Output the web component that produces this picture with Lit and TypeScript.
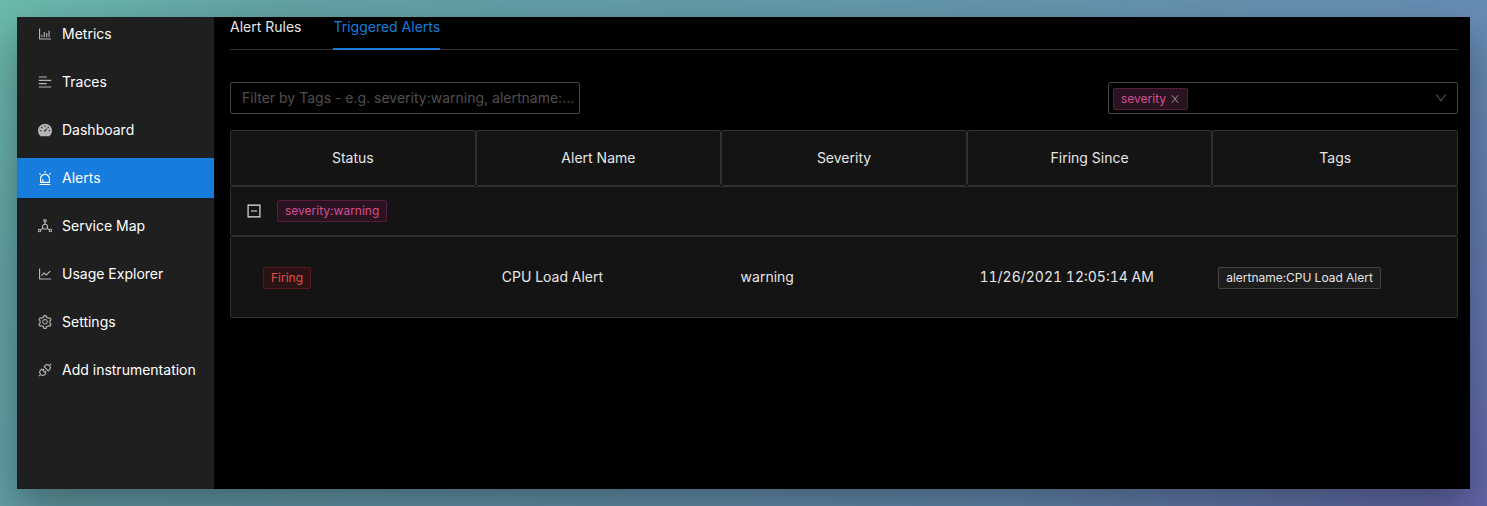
import { LitElement, html, css, svg } from "lit";
import { customElement, state } from "lit/decorators.js";

const axes =
  "M888 792H200V168c0-4.4-3.6-8-8-8h-56c-4.4 0-8 3.6-8 8v688c0 4.4 3.6 8 8 8h752c4.4 0 8-3.6 8-8v-56c0-4.4-3.6-8-8-8z";

const icons = {
  bars: svg`<path d="${axes}M288 712h56c4.4 0 8-3.6 8-8V560c0-4.4-3.6-8-8-8h-56c-4.4 0-8 3.6-8 8v144c0 4.4 3.6 8 8 8zm152 0h56c4.4 0 8-3.6 8-8V384c0-4.4-3.6-8-8-8h-56c-4.4 0-8 3.6-8 8v320c0 4.4 3.6 8 8 8zm152 0h56c4.4 0 8-3.6 8-8V462c0-4.4-3.6-8-8-8h-56c-4.4 0-8 3.6-8 8v242c0 4.4 3.6 8 8 8zm152 0h56c4.4 0 8-3.6 8-8V304c0-4.4-3.6-8-8-8h-56c-4.4 0-8 3.6-8 8v400c0 4.4 3.6 8 8 8z"/>`,
  lines: svg`<path d="M120 230h496c4.4 0 8-3.6 8-8v-56c0-4.4-3.6-8-8-8H120c-4.4 0-8 3.6-8 8v56c0 4.4 3.6 8 8 8zm0 424h496c4.4 0 8-3.6 8-8v-56c0-4.4-3.6-8-8-8H120c-4.4 0-8 3.6-8 8v56c0 4.4 3.6 8 8 8zm784 140H120c-4.4 0-8 3.6-8 8v56c0 4.4 3.6 8 8 8h784c4.4 0 8-3.6 8-8v-56c0-4.4-3.6-8-8-8zm0-424H120c-4.4 0-8 3.6-8 8v56c0 4.4 3.6 8 8 8h784c4.4 0 8-3.6 8-8v-56c0-4.4-3.6-8-8-8z"/>`,
  gauge: svg`<path d="M924.8 385.6a446.7 446.7 0 00-96-142.4 446.7 446.7 0 00-142.4-96C631.1 123.8 572.5 112 512 112s-119.1 11.8-174.4 35.2a446.7 446.7 0 00-142.4 96 446.7 446.7 0 00-96 142.4C75.8 440.9 64 499.5 64 560c0 132.7 58.3 257.7 159.9 343.1l1.7 1.4c5.8 4.8 13.1 7.5 20.6 7.5h531.7c7.5 0 14.8-2.7 20.6-7.5l1.7-1.4C901.7 817.7 960 692.7 960 560c0-60.5-11.9-119.1-35.2-174.4zM482 232c0-4.4 3.6-8 8-8h44c4.4 0 8 3.6 8 8v80c0 4.4-3.6 8-8 8h-44c-4.4 0-8-3.6-8-8v-80zM270 582c0 4.4-3.6 8-8 8h-80c-4.4 0-8-3.6-8-8v-44c0-4.4 3.6-8 8-8h80c4.4 0 8 3.6 8 8v44zm90.7-204.5l-31.1 31.1a8.03 8.03 0 01-11.3 0L261.7 352a8.03 8.03 0 010-11.3l31.1-31.1c3.1-3.1 8.2-3.1 11.3 0l56.6 56.6c3.1 3.1 3.1 8.2 0 11.3zm291.1 83.6l-84.5 84.5c5 18.7.2 39.4-14.5 54.1a55.95 55.95 0 01-79.2 0 55.95 55.95 0 010-79.2 55.87 55.87 0 0154.1-14.5l84.5-84.5c3.1-3.1 8.2-3.1 11.3 0l28.3 28.3c3.1 3.1 3.1 8.1 0 11.3zm43-52.4l-31.1-31.1a8.03 8.03 0 010-11.3l56.6-56.6c3.1-3.1 8.2-3.1 11.3 0l31.1 31.1c3.1 3.1 3.1 8.2 0 11.3l-56.6 56.6a8.03 8.03 0 01-11.3 0zM846 582c0 4.4-3.6 8-8 8h-80c-4.4 0-8-3.6-8-8v-44c0-4.4 3.6-8 8-8h80c4.4 0 8 3.6 8 8v44z"/>`,
  alert: svg`<path d="M193 796c0 17.7 14.3 32 32 32h574c17.7 0 32-14.3 32-32V563c0-176.2-142.8-319-319-319S193 386.8 193 563v233zm72-233c0-136.4 110.6-247 247-247s247 110.6 247 247v193H404V585c0-5.5-4.5-10-10-10h-44c-5.5 0-10 4.5-10 10v171h-75V563zm-48.1-252.5l39.6-39.6c3.1-3.1 3.1-8.2 0-11.3l-67.9-67.9a8.03 8.03 0 00-11.3 0l-39.6 39.6a8.03 8.03 0 000 11.3l67.9 67.9c3.1 3.1 8.1 3.1 11.3 0zm669.6-79.2l-39.6-39.6a8.03 8.03 0 00-11.3 0l-67.9 67.9a8.03 8.03 0 000 11.3l39.6 39.6c3.1 3.1 8.2 3.1 11.3 0l67.9-67.9c3.1-3.2 3.1-8.2 0-11.3zM832 892H192c-17.7 0-32 14.3-32 32v24c0 4.4 3.6 8 8 8h688c4.4 0 8-3.6 8-8v-24c0-17.7-14.3-32-32-32zM484 180h56c4.4 0 8-3.6 8-8V76c0-4.4-3.6-8-8-8h-56c-4.4 0-8 3.6-8 8v96c0 4.4 3.6 8 8 8z"/>`,
  nodes: svg`<g fill="none" stroke="currentColor" stroke-width="72"><circle cx="512" cy="560" r="160"/><circle cx="512" cy="180" r="80"/><circle cx="166" cy="796" r="80"/><circle cx="858" cy="796" r="80"/><path d="M512 250v150M232 752l146-88M792 752l-146-88"/></g>`,
  trend: svg`<path d="${axes}M305.8 637.7c3.1 3.1 8.1 3.1 11.3 0l138.3-137.6L583 628.5c3.1 3.1 8.2 3.1 11.3 0l275.4-275.3c3.1-3.1 3.1-8.2 0-11.3l-39.6-39.6a8.03 8.03 0 00-11.3 0l-230 229.9L461.4 404a8.03 8.03 0 00-11.3 0L266.3 586.7a8.03 8.03 0 000 11.3l39.5 39.7z"/>`,
  gear: svg`<path d="M924.8 625.7l-65.5-56c3.1-19 4.7-38.4 4.7-57.8s-1.6-38.8-4.7-57.8l65.5-56a32.03 32.03 0 009.3-35.2l-.9-2.6a443.74 443.74 0 00-79.7-137.9l-1.8-2.1a32.12 32.12 0 00-35.1-9.5l-81.3 28.9c-30-24.6-63.5-44-99.7-57.6l-15.7-85a32.05 32.05 0 00-25.8-25.7l-2.7-.5c-52.1-9.4-106.9-9.4-159 0l-2.7.5a32.05 32.05 0 00-25.8 25.7l-15.8 85.4a351.86 351.86 0 00-99 57.4l-81.9-29.1a32 32 0 00-35.1 9.5l-1.8 2.1a446.02 446.02 0 00-79.7 137.9l-.9 2.6c-4.5 12.5-.8 26.5 9.3 35.2l66.3 56.6c-3.1 18.8-4.6 38-4.6 57.1 0 19.2 1.5 38.4 4.6 57.1L99 625.5a32.03 32.03 0 00-9.3 35.2l.9 2.6c18.1 50.4 44.9 96.9 79.7 137.9l1.8 2.1a32.12 32.12 0 0035.1 9.5l81.9-29.1c29.8 24.5 63.1 43.9 99 57.4l15.8 85.4a32.05 32.05 0 0025.8 25.7l2.7.5a449.4 449.4 0 00159 0l2.7-.5a32.05 32.05 0 0025.8-25.7l15.7-85a350 350 0 0099.7-57.6l81.3 28.9a32 32 0 0035.1-9.5l1.8-2.1c34.8-41.1 61.6-87.5 79.7-137.9l.9-2.6c4.5-12.3.8-26.3-9.3-35zM788.3 465.9c2.5 15.1 3.8 30.6 3.8 46.1s-1.3 31-3.8 46.1l-6.6 40.1 74.7 63.9a370.03 370.03 0 01-42.6 73.6L721 702.8l-31.4 25.8c-23.9 19.6-50.5 35-79.3 45.8l-38.1 14.3-17.9 97a377.5 377.5 0 01-85 0l-17.9-97.2-37.8-14.5c-28.5-10.8-55-26.2-78.7-45.7l-31.4-25.9-93.4 33.2c-17-22.9-31.2-47.6-42.6-73.6l75.5-64.5-6.5-40c-2.4-14.9-3.7-30.3-3.7-45.5 0-15.3 1.2-30.6 3.7-45.5l6.5-40-75.5-64.5c11.3-26.1 25.6-50.7 42.6-73.6l93.4 33.2 31.4-25.9c23.7-19.5 50.2-34.9 78.7-45.7l37.9-14.3 17.9-97.2c28.1-3.2 56.8-3.2 85 0l17.9 97 38.1 14.3c28.7 10.8 55.4 26.2 79.3 45.8l31.4 25.8 92.8-32.9c17 22.9 31.2 47.6 42.6 73.6L781.8 426l6.5 39.9zM512 326c-97.2 0-176 78.8-176 176s78.8 176 176 176 176-78.8 176-176-78.8-176-176-176zm79.2 255.2A111.6 111.6 0 01512 614c-29.9 0-58-11.7-79.2-32.8A111.6 111.6 0 01400 502c0-29.9 11.7-58 32.8-79.2C454 401.6 482.1 390 512 390c29.9 0 58 11.6 79.2 32.8A111.6 111.6 0 01624 502c0 29.9-11.7 58-32.8 79.2z"/>`,
  plug: svg`<g transform="translate(512 512) rotate(-45)" fill="none" stroke="currentColor" stroke-width="68"><path d="M-110-190h-90a190 190 0 000 380h90zM110-190h90a190 190 0 010 380h-90zM-110-90H20M-110 90H20M-390 0h-170M390 0h170"/></g>`,
  down: svg`<path d="M884 256h-75c-5.1 0-9.9 2.500-12.900 6.600L512 654.200 227.900 262.600c-3-4.100-7.800-6.600-12.900-6.600h-75c-6.500 0-10.300 7.400-6.500 12.700l352.600 486.100c12.800 17.600 39 17.600 51.700 0l352.600-486.100c3.900-5.300.1-12.700-6.400-12.700z"/>`,
  close: svg`<path d="M563.800 512l262.500-312.900c4.400-5.200.7-13.100-6.100-13.100h-79.800c-4.700 0-9.200 2.100-12.300 5.700L511.600 449.800 295.100 191.700c-3-3.600-7.500-5.700-12.300-5.700H203c-6.800 0-10.500 7.900-6.100 13.100L459.400 512 196.900 824.900A7.950 7.950 0 00203 838h79.800c4.700 0 9.200-2.100 12.300-5.700l216.500-258.100 216.500 258.100c3 3.600 7.500 5.700 12.300 5.700h79.800c6.800 0 10.500-7.900 6.100-13.100L563.800 512z"/>`,
  collapse: svg`<path fill-rule="evenodd" d="M96 96h832v832H96zM170 170v684h684V170zM320 475h384v74H320z"/>`,
};

const icon = (name: keyof typeof icons) =>
  html`<svg class="icon" viewBox="64 64 896 896" fill="currentColor" aria-hidden="true">${icons[name]}</svg>`;

const menu: [keyof typeof icons, string][] = [
  ["bars", "Metrics"],
  ["lines", "Traces"],
  ["gauge", "Dashboard"],
  ["alert", "Alerts"],
  ["nodes", "Service Map"],
  ["trend", "Usage Explorer"],
  ["gear", "Settings"],
  ["plug", "Add instrumentation"],
];

const columns = ["Status", "Alert Name", "Severity", "Firing Since", "Tags"];
const tabs = ["Alert Rules", "Triggered Alerts"];

@customElement("app-root")
export class AppRoot extends LitElement {
  @state() private current = "Alerts";
  @state() private tab = "Triggered Alerts";
  @state() private open = true;

  static styles = css`
    :host {
      display: flex;
      box-sizing: border-box;
      min-height: 100vh;
      padding: 17px;
      background: linear-gradient(135deg, #6bbbae 0%, #64a3a5 14%, #639ba8 35%, #668db4 75%, #6266a8 100%);
      font-family: Inter, "Liberation Sans", sans-serif;
      font-size: 14px;
      line-height: 22px;
      color: #e6e6e6;
    }
    * { box-sizing: border-box; }
    button, input, select { font: inherit; color: inherit; margin: 0; }
    button { background: none; border: 0; padding: 0; cursor: pointer; }
    .icon { display: block; flex: none; width: 14px; height: 14px; }
    .window {
      display: flex;
      flex: 1;
      min-width: 0;
      background: #000;
      box-shadow: 0 18px 40px rgba(0, 0, 0, 0.35);
    }
    .side { flex: none; width: 197px; background: #1f1f1f; }
    .menu { list-style: none; margin: 0; padding: 0; display: grid; gap: 8px; }
    .menu li:first-child .item { height: 37px; padding-bottom: 3px; }
    .item {
      display: flex;
      align-items: center;
      gap: 10px;
      height: 40px;
      padding-left: 21px;
      color: #fff;
      text-decoration: none;
      white-space: nowrap;
    }
    .item .icon { color: #b4b4b4; }
    .item.on { background: #177ddc; }
    .item.on .icon { color: #fff; }
    .main { flex: 1; min-width: 0; padding: 0 12px 0 16px; }
    .tabs { display: flex; gap: 32px; border-bottom: 1px solid #303030; }
    .tab { height: 33px; margin-bottom: -1px; padding-bottom: 12px; border-bottom: 2px solid transparent; line-height: 16px; }
    .tab.on { color: #177ddc; border-color: #177ddc; }
    .filters { display: flex; justify-content: space-between; gap: 16px; margin: 32px 0 16px; }
    .field {
      width: 350px;
      height: 32px;
      padding: 0 0 2px 11px;
      border: 1px solid #434343;
      border-radius: 2px;
      background: transparent;
      outline: none;
    }
    .field::placeholder { color: #505050; opacity: 1; }
    .picker { display: flex; align-items: center; padding: 0 10px 0 4px; }
    .picker .tag { margin-top: 2px; }
    .picker select { flex: 1; min-width: 0; height: 30px; appearance: none; background: transparent; border: 0; outline: none; }
    .picker > .icon { width: 12px; height: 12px; color: #5a5a5a; }
    .tag {
      display: inline-flex;
      align-items: center;
      gap: 4px;
      height: 22px;
      padding: 0 7px;
      border: 1px solid #434343;
      border-radius: 2px;
      background: #1d1d1d;
      font-size: 12px;
      line-height: 20px;
      white-space: nowrap;
    }
    .magenta { color: #d34f93; background: #291321; border-color: #551c3b; }
    .red { color: #e0504b; background: #2a1215; border-color: #58181c; }
    .remove .icon { width: 10px; height: 10px; color: #8a8a8a; }
    table, thead, tbody { display: block; }
    tr { display: grid; grid-template-columns: repeat(5, minmax(0, 1fr)); }
    th, td { padding: 0; text-align: left; }
    th { height: 56px; border: 1px solid #303030; border-radius: 2px; background: #141414; text-align: center; font-weight: 400; line-height: 54px; }
    .group { display: flex; }
    .group td { flex: 1; display: flex; align-items: center; gap: 16px; height: 50px; padding: 0 16px; border: 1px solid #303030; border-radius: 2px; background: #141414; }
    .row { align-items: center; height: 82px; padding: 0 16px; border: 1px solid #303030; border-radius: 2px; background: #141414; font-variant-numeric: tabular-nums; }
    .row td { padding: 0 16px; white-space: nowrap; }
    .row .tag { vertical-align: middle; }
  `;

  render() {
    return html`
      <div class="window">
        <nav class="side" aria-label="Main">
          <ul class="menu">
            ${menu.map(
              ([glyph, label]) => html`<li>
                <a class="item ${label === this.current ? "on" : ""}" href="#" @click=${(e: Event) => { e.preventDefault(); this.current = label; }}>${icon(glyph)}<span>${label}</span></a>
              </li>`,
            )}
          </ul>
        </nav>
        <main class="main">
          <div class="tabs" role="tablist">
            ${tabs.map(
              (t) => html`<button class="tab ${t === this.tab ? "on" : ""}" role="tab" aria-selected=${t === this.tab} @click=${() => (this.tab = t)}>${t}</button>`,
            )}
          </div>
          <div class="filters">
            <input class="field" type="text" aria-label="Filter by tags" placeholder="Filter by Tags - e.g. severity:warning, alertname:..." />
            <div class="field picker">
              <span class="tag magenta">severity<button class="remove" aria-label="Remove severity">${icon("close")}</button></span>
              <select aria-label="Group by"><option></option></select>
              ${icon("down")}
            </div>
          </div>
          <table>
            <thead>
              <tr>${columns.map((c) => html`<th scope="col">${c}</th>`)}</tr>
            </thead>
            <tbody>
              <tr class="group">
                <td colspan="5">
                  <button aria-label="Toggle group" aria-expanded=${this.open} @click=${() => (this.open = !this.open)}>${icon("collapse")}</button>
                  <span class="tag magenta">severity:warning</span>
                </td>
              </tr>
              ${this.open
                ? html`<tr class="row">
                    <td><span class="tag red">Firing</span></td>
                    <td>CPU Load Alert</td>
                    <td>warning</td>
                    <td>11/26/2021 12:05:14 AM</td>
                    <td><span class="tag">alertname:CPU Load Alert</span></td>
                  </tr>`
                : null}
            </tbody>
          </table>
        </main>
      </div>
    `;
  }
}
